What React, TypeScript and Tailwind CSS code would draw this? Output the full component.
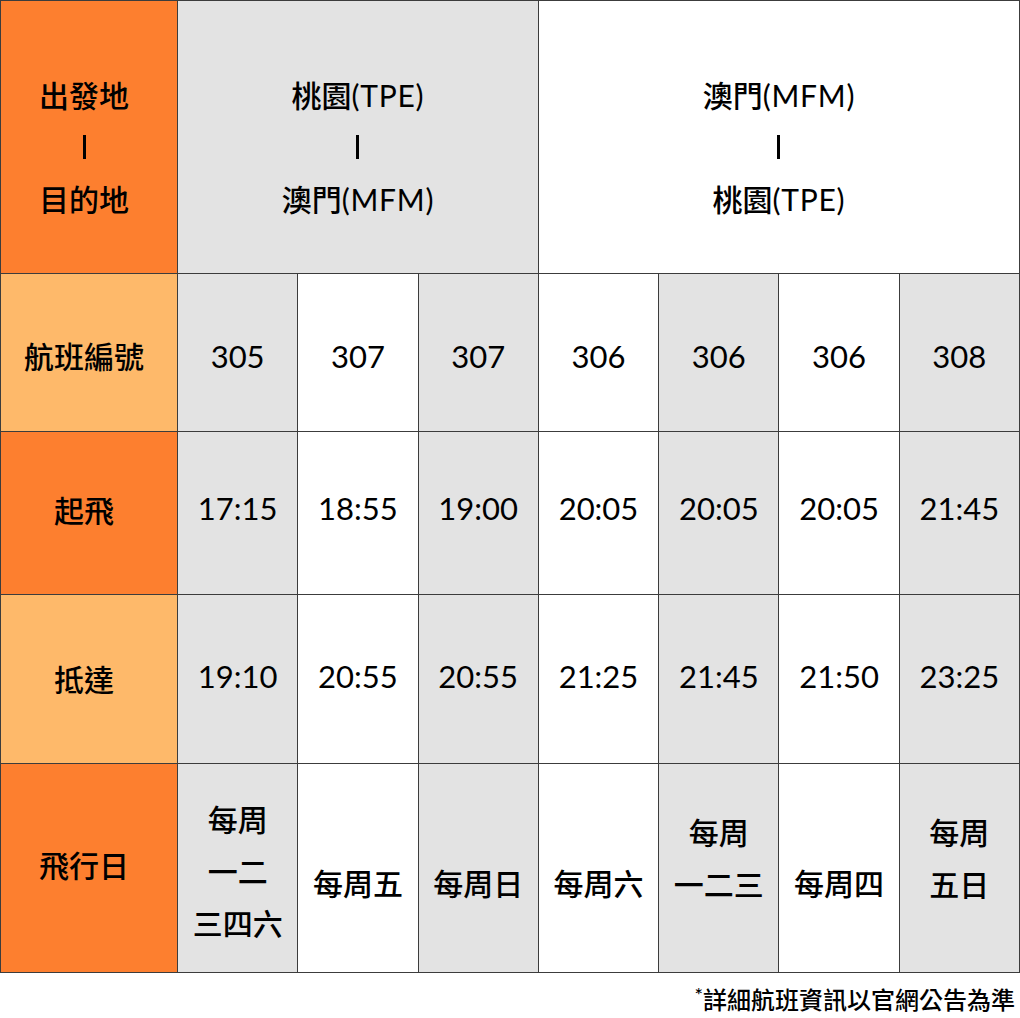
import React from "react";

const FONT = "font-['Lato','Noto_Sans_CJK_TC',sans-serif]";

type Cell = { text: React.ReactNode; gray: boolean; shift?: string };

const flights = ["305", "307", "307", "306", "306", "306", "308"];
const departs = ["17:15", "18:55", "19:00", "20:05", "20:05", "20:05", "21:45"];
const arrives = ["19:10", "20:55", "20:55", "21:25", "21:45", "21:50", "23:25"];

// days: lines per cell, shift tweaks the vertical position like the reference
const days: { lines: string[]; shift: string }[] = [
  { lines: ["每周", "一二", "三四六"], shift: "pt-[6px]" },
  { lines: ["每周五"], shift: "pt-[30px]" },
  { lines: ["每周日"], shift: "pt-[30px]" },
  { lines: ["每周六"], shift: "pt-[30px]" },
  { lines: ["每周", "一二三"], shift: "pb-[20px]" },
  { lines: ["每周四"], shift: "pt-[30px]" },
  { lines: ["每周", "五日"], shift: "pb-[20px]" },
];

function Bar() {
  return (
    <div className="flex h-[52px] items-center justify-center">
      <div className="h-[24px] w-[3px] bg-black" />
    </div>
  );
}

function Label({ text, light, shift = "" }: { text: React.ReactNode; light?: boolean; shift?: string }) {
  return (
    <div
      className={[
        "flex flex-col items-center justify-center pr-[10px] text-[30px] font-medium text-black",
        light ? "bg-[#FEB96A]" : "bg-[#FD7F2F]",
        shift,
      ].join(" ")}
    >
      {text}
    </div>
  );
}

function DataCell({ text, gray, shift = "" }: Cell) {
  return (
    <div
      className={[
        "flex flex-col items-center justify-center text-[31px] text-black",
        gray ? "bg-[#E3E3E3]" : "bg-white",
        shift,
      ].join(" ")}
    >
      {text}
    </div>
  );
}

function Place({ zh, code }: { zh: string; code: string }) {
  return (
    <span>
      <span className="font-medium">{zh}</span>
      <span className="tracking-wide">({code})</span>
    </span>
  );
}

export default function App() {
  return (
    <div className={`w-[1020px] bg-white ${FONT}`}>
      <div className="grid grid-cols-[176px_repeat(7,minmax(0,1fr))] grid-rows-[272px_157px_162px_168px_208px] gap-px bg-[#3c3c3c] p-px">
        {/* header row */}
        <Label
          shift="pt-[20px]"
          text={
            <div className="flex flex-col items-center leading-[52px]">
              <span>出發地</span>
              <Bar />
              <span>目的地</span>
            </div>
          }
        />
        <div className="col-span-3 flex flex-col items-center justify-center bg-[#E3E3E3] pt-[20px] text-[30px] leading-[52px]">
          <Place zh="桃園" code="TPE" />
          <Bar />
          <Place zh="澳門" code="MFM" />
        </div>
        <div className="col-span-4 flex flex-col items-center justify-center bg-white pt-[20px] text-[30px] leading-[52px]">
          <Place zh="澳門" code="MFM" />
          <Bar />
          <Place zh="桃園" code="TPE" />
        </div>

        {/* flight numbers */}
        <Label light text="航班編號" shift="pt-[8px]" />
        {flights.map((f, i) => (
          <DataCell key={"f" + i} text={f} gray={i % 2 === 0} shift="pt-[8px]" />
        ))}

        {/* departure */}
        <Label text="起飛" shift="pb-[6px]" />
        {departs.map((t, i) => (
          <DataCell key={"d" + i} text={t} gray={i % 2 === 0} shift="pb-[10px]" />
        ))}

        {/* arrival */}
        <Label light text="抵達" />
        {arrives.map((t, i) => (
          <DataCell key={"a" + i} text={t} gray={i % 2 === 0} shift="pb-[6px]" />
        ))}

        {/* days */}
        <Label text="飛行日" shift="pb-[6px]" />
        {days.map((d, i) => (
          <DataCell
            key={"w" + i}
            gray={i % 2 === 0}
            shift={d.shift}
            text={
              <div className="flex flex-col items-center text-[30px] font-medium leading-[52px]">
                {d.lines.map((l) => (
                  <span key={l}>{l}</span>
                ))}
              </div>
            }
          />
        ))}
      </div>

      <div className="flex justify-end pr-[5px] pt-[12px] text-[24px] font-medium leading-[30px] text-black">
        <span className="relative -top-[6px] text-[20px]">*</span>
        <span>詳細航班資訊以官網公告為準</span>
      </div>
    </div>
  );
}
